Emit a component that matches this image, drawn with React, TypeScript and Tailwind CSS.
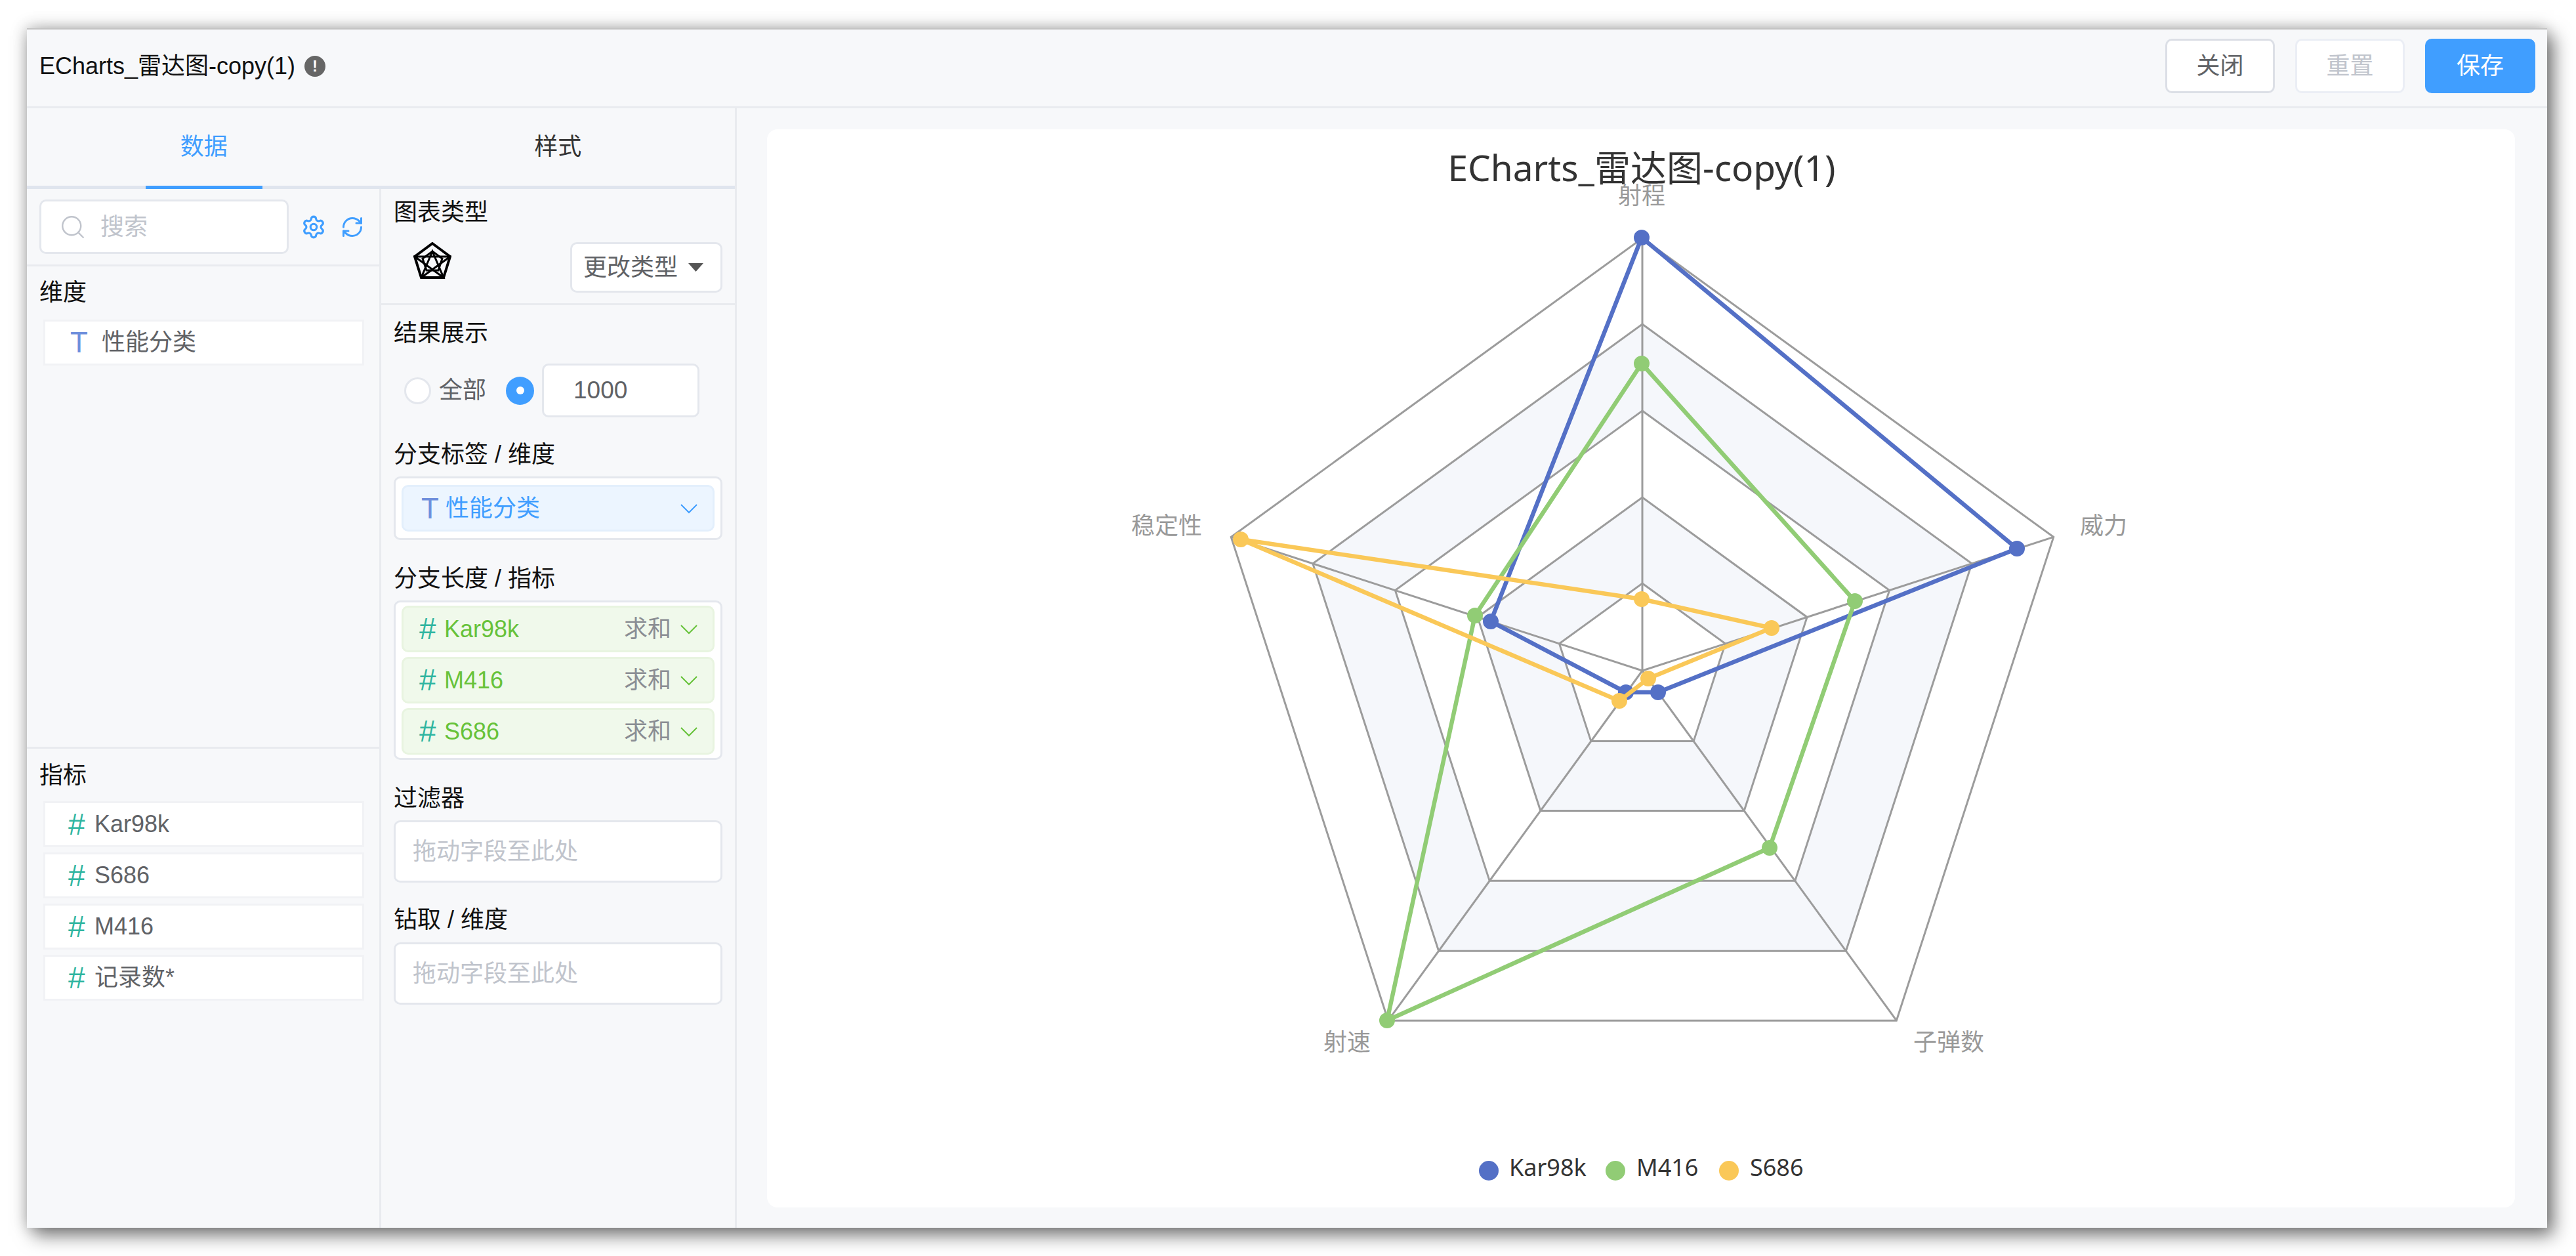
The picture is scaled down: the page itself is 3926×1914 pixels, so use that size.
import { RefreshCw, Search, Settings } from 'lucide-react';

const CX = 2503;
const CY = 1022;
const RINGS = [659, 528, 396, 264, 133];
const VERTEX = [-90, -18, 54, 126, 198].map(d => (d * Math.PI) / 180);

const ringPoints = (r: number) =>
  VERTEX.map(a => `${CX + r * Math.cos(a)},${CY + r * Math.sin(a)}`).join(' ');

const SERIES = [
  {
    name: 'Kar98k',
    color: '#5470c6',
    points: [[2502, 362], [3074, 836], [2527, 1055], [2478, 1055], [2272, 947]],
  },
  {
    name: 'M416',
    color: '#91cc75',
    points: [[2502, 554], [2827, 916], [2697, 1292], [2114, 1555], [2248, 938]],
  },
  {
    name: 'S686',
    color: '#fac858',
    points: [[2502, 913], [2700, 957], [2512, 1034], [2468, 1068], [1891, 822]],
  },
];

const AXIS_LABELS = [
  { text: '射程', x: 2502, y: 298, anchor: 'middle' },
  { text: '威力', x: 3170, y: 801, anchor: 'start' },
  { text: '子弹数', x: 2916, y: 1588, anchor: 'start' },
  { text: '射速', x: 2089, y: 1588, anchor: 'end' },
  { text: '稳定性', x: 1832, y: 801, anchor: 'end' },
];

const LEGEND = [
  { name: 'Kar98k', color: '#5470c6', dot: 2269, x: 2300 },
  { name: 'M416', color: '#91cc75', dot: 2462, x: 2494 },
  { name: 'S686', color: '#fac858', dot: 2635, x: 2667 },
];

const CHART_FONT = '"Noto Sans", "Noto Sans CJK SC", sans-serif';

function RadarChart() {
  return (
    <svg viewBox="1169 197 2664 1643" className="block h-full w-full">
      <text x={2502} y={276} textAnchor="middle" fontSize={55} fill="#333" fontFamily={CHART_FONT}>
        ECharts_雷达图-copy(1)
      </text>
      {RINGS.map((r, i) => (
        <polygon
          key={r}
          points={ringPoints(r)}
          fill={i % 2 === 1 ? '#f5f7fb' : '#ffffff'}
          stroke="#9c9c9c"
          strokeWidth={3}
        />
      ))}
      {VERTEX.map(a => (
        <line
          key={a}
          x1={CX}
          y1={CY}
          x2={CX + 659 * Math.cos(a)}
          y2={CY + 659 * Math.sin(a)}
          stroke="#9c9c9c"
          strokeWidth={3}
        />
      ))}
      {AXIS_LABELS.map(l => (
        <text
          key={l.text}
          x={l.x}
          y={l.y + 13}
          textAnchor={l.anchor as 'start' | 'middle' | 'end'}
          fontSize={36}
          fill="#999"
          fontFamily={CHART_FONT}
        >
          {l.text}
        </text>
      ))}
      {SERIES.map(s => (
        <g key={s.name}>
          <polygon
            points={s.points.map(p => p.join(',')).join(' ')}
            fill="none"
            stroke={s.color}
            strokeWidth={6.5}
            strokeLinejoin="round"
          />
          {s.points.map(p => (
            <circle key={p.join()} cx={p[0]} cy={p[1]} r={12} fill={s.color} />
          ))}
        </g>
      ))}
      {LEGEND.map(l => (
        <g key={l.name}>
          <circle cx={l.dot} cy={1784} r={15} fill={l.color} />
          <text x={l.x} y={1792} fontSize={36} fill="#333" fontFamily={CHART_FONT}>
            {l.name}
          </text>
        </g>
      ))}
    </svg>
  );
}

function Chevron({ className }: { className: string }) {
  return (
    <svg viewBox="0 0 28 16" className={`h-[16px] w-[28px] ${className}`} fill="none" stroke="currentColor" strokeWidth={2}>
      <polyline points="2,2 14,14 26,2" />
    </svg>
  );
}

function RadarIcon() {
  const outer = [[29, 2], [56, 22], [46, 54], [12, 54], [2, 22]];
  const inner = [[29, 14], [44, 25], [38, 43], [20, 43], [14, 25]];
  const toStr = (pts: number[][]) => pts.map(p => p.join(',')).join(' ');
  return (
    <svg viewBox="0 0 58 56" className="h-[56px] w-[58px]" fill="none" stroke="#000" strokeWidth={4}>
      <polygon points={toStr(outer)} />
      <polygon points={toStr(inner)} strokeWidth={3} />
      <polyline points="12,54 29,14 46,54 2,22 56,22 12,54" strokeWidth={3} />
    </svg>
  );
}

function FieldLabel({ text, className }: { text: string; className?: string }) {
  return <div className={`h-[36px] text-[36px] leading-[36px] text-[#111] ${className ?? ''}`}>{text}</div>;
}

function FieldItem({ icon, name }: { icon: 'T' | '#'; name: string }) {
  return (
    <div className="ml-[25px] mr-[23px] flex h-[70px] items-center border-[3px] border-[#f1f2f5] bg-white pl-[35px] text-[36px] text-[#606266]">
      {icon === 'T' ? (
        <span className="w-[51px] pl-[3px] text-[44px] font-light text-[#6f8fdc]">T</span>
      ) : (
        <span className="w-[40px] text-[46px] text-[#2fb5a0]">#</span>
      )}
      <span>{name}</span>
    </div>
  );
}

function MetricRow({ name }: { name: string }) {
  return (
    <div className="flex h-[71px] items-center rounded-[10px] border-[3px] border-[#e8f4e0] bg-[#f0f9eb] pl-[24px] pr-[22px] text-[36px]">
      <span className="w-[38px] text-[46px] text-[#2fb5a0]">#</span>
      <span className="flex-1 text-[#67c23a]">{name}</span>
      <span className="mr-[13px] text-[#8a8d93]">求和</span>
      <Chevron className="text-[#67c23a]" />
    </div>
  );
}

function DropZone() {
  return (
    <div className="flex h-[95px] items-center rounded-[10px] border-[3px] border-[#e4e7ed] bg-white pl-[26px] text-[36px] text-[#c0c4cc]">
      拖动字段至此处
    </div>
  );
}

export default function App() {
  return (
    <div
      className="h-[1914px] w-[3926px] overflow-hidden bg-white pl-[41px] pt-[43px]"
      style={{ fontFamily: '"Liberation Sans", "Noto Sans CJK SC", sans-serif' }}
    >
      <div className="flex h-[1828px] w-[3841px] flex-col border-t-[2px] border-[#c4c4c4] bg-[#f7f8fa] shadow-[10px_12px_26px_rgba(0,0,0,0.5),-2px_-2px_22px_rgba(0,0,0,0.22)]">
        {/* Header */}
        <div className="flex h-[120px] shrink-0 items-center justify-between border-b-[3px] border-[#e9ebef] pb-[6px] pl-[19px] pr-[18px]">
          <div className="flex items-center gap-[14px] text-[36px] text-[#111]">
            <span>ECharts_雷达图-copy(1)</span>
            <span className="flex h-[32px] w-[32px] items-center justify-center rounded-full bg-[#666] text-[24px] font-bold leading-none text-white">
              !
            </span>
          </div>
          <div className="flex gap-[31px] text-[36px]">
            <button className="h-[83px] w-[167px] rounded-[10px] border-[3px] border-[#dcdfe6] bg-white text-[#606266]">关闭</button>
            <button className="h-[83px] w-[167px] rounded-[10px] border-[3px] border-[#ebeef5] bg-white text-[#c0c4cc]">重置</button>
            <button className="h-[83px] w-[168px] rounded-[10px] bg-[#409eff] text-white">保存</button>
          </div>
        </div>

        <div className="flex min-h-0 flex-1">
          {/* Sidebar */}
          <div className="flex w-[1082px] shrink-0 flex-col border-r-[3px] border-[#e9ebef]">
            <div className="flex h-[123px] shrink-0 border-b-[5px] border-[#e0e5ee] text-[36px]">
              <div className="relative flex w-[540px] items-center justify-center text-[#409eff]">
                数据
                <div className="absolute bottom-[-5px] left-[181px] h-[5px] w-[178px] bg-[#409eff]" />
              </div>
              <div className="flex w-[540px] items-center justify-center text-[#333]">样式</div>
            </div>

            <div className="flex min-h-0 flex-1">
              {/* Fields column */}
              <div className="flex w-[540px] shrink-0 flex-col border-r-[3px] border-[#e9ebef]">
                <div className="flex h-[118px] shrink-0 items-center border-b-[3px] border-[#e9ebef] pl-[19px]">
                  <div className="flex h-[83px] w-[380px] items-center rounded-[10px] border-[3px] border-[#e4e7ed] bg-white pl-[27px] text-[36px] text-[#c0c4cc]">
                    <Search size={42} strokeWidth={1.4} className="mr-[21px] text-[#c0c4cc]" />
                    搜索
                  </div>
                  <Settings size={38} strokeWidth={2} className="ml-[19px] text-[#409eff]" />
                  <RefreshCw size={36} strokeWidth={2} className="ml-[22px] text-[#409eff]" />
                </div>
                <div className="h-[735px] shrink-0 border-b-[3px] border-[#e9ebef]">
                  <FieldLabel text="维度" className="ml-[19px] mt-[22px]" />
                  <div className="mt-[23px]">
                    <FieldItem icon="T" name="性能分类" />
                  </div>
                </div>
                <FieldLabel text="指标" className="ml-[19px] mt-[23px]" />
                <div className="mt-[21px] flex flex-col gap-[8px]">
                  <FieldItem icon="#" name="Kar98k" />
                  <FieldItem icon="#" name="S686" />
                  <FieldItem icon="#" name="M416" />
                  <FieldItem icon="#" name="记录数*" />
                </div>
              </div>

              {/* Settings column */}
              <div className="flex-1">
                <div className="h-[177px] border-b-[3px] border-[#e9ebef] px-[19px] pt-[18px]">
                  <FieldLabel text="图表类型" />
                  <div className="mt-[27px] flex items-start justify-between">
                    <div className="ml-[30px]">
                      <RadarIcon />
                    </div>
                    <div className="flex h-[77px] w-[232px] items-center rounded-[10px] border-[3px] border-[#e4e7ed] bg-white pl-[17px] text-[36px] text-[#606266]">
                      更改类型
                      <svg viewBox="0 0 23 13" className="ml-[16px] h-[13px] w-[23px]">
                        <polygon points="0,0 23,0 11.5,13" fill="#555" />
                      </svg>
                    </div>
                  </div>
                </div>

                <div className="px-[19px]">
                  <FieldLabel text="结果展示" className="mt-[25px]" />
                  <div className="mt-[28px] flex h-[82px] items-center text-[36px] text-[#606266]">
                    <span className="ml-[16px] h-[41px] w-[41px] rounded-full border-[3px] border-[#e4e7ed] bg-white" />
                    <span className="ml-[12px]">全部</span>
                    <span className="ml-[30px] flex h-[43px] w-[43px] items-center justify-center rounded-full bg-[#409eff]">
                      <span className="h-[12px] w-[12px] rounded-full bg-white" />
                    </span>
                    <div className="ml-[12px] flex h-[82px] w-[240px] items-center rounded-[10px] border-[3px] border-[#e4e7ed] bg-white pl-[45px] text-[37px]">
                      1000
                    </div>
                  </div>

                  <FieldLabel text="分支标签 / 维度" className="mt-[39px]" />
                  <div className="mt-[15px] rounded-[10px] border-[3px] border-[#e4e7ed] bg-white px-[9px] py-[10px]">
                    <div className="flex h-[71px] items-center rounded-[10px] border-[3px] border-[#e3effc] bg-[#ecf5ff] pl-[27px] pr-[22px] text-[36px] text-[#409eff]">
                      <span className="w-[37px] text-[44px] font-light text-[#6f8fdc]">T</span>
                      <span className="flex-1">性能分类</span>
                      <Chevron className="text-[#409eff]" />
                    </div>
                  </div>

                  <FieldLabel text="分支长度 / 指标" className="mt-[41px]" />
                  <div className="mt-[15px] flex flex-col gap-[7px] rounded-[10px] border-[3px] border-[#e4e7ed] bg-white px-[9px] py-[5px]">
                    <MetricRow name="Kar98k" />
                    <MetricRow name="M416" />
                    <MetricRow name="S686" />
                  </div>

                  <FieldLabel text="过滤器" className="mt-[41px]" />
                  <div className="mt-[15px]">
                    <DropZone />
                  </div>

                  <FieldLabel text="钻取 / 维度" className="mt-[39px]" />
                  <div className="mt-[16px]">
                    <DropZone />
                  </div>
                </div>
              </div>
            </div>
          </div>

          {/* Chart area */}
          <div className="min-w-0 flex-1 pb-[31px] pl-[46px] pr-[49px] pt-[32px]">
            <div className="h-full w-full overflow-hidden rounded-[16px] bg-white">
              <RadarChart />
            </div>
          </div>
        </div>
      </div>
    </div>
  );
}
